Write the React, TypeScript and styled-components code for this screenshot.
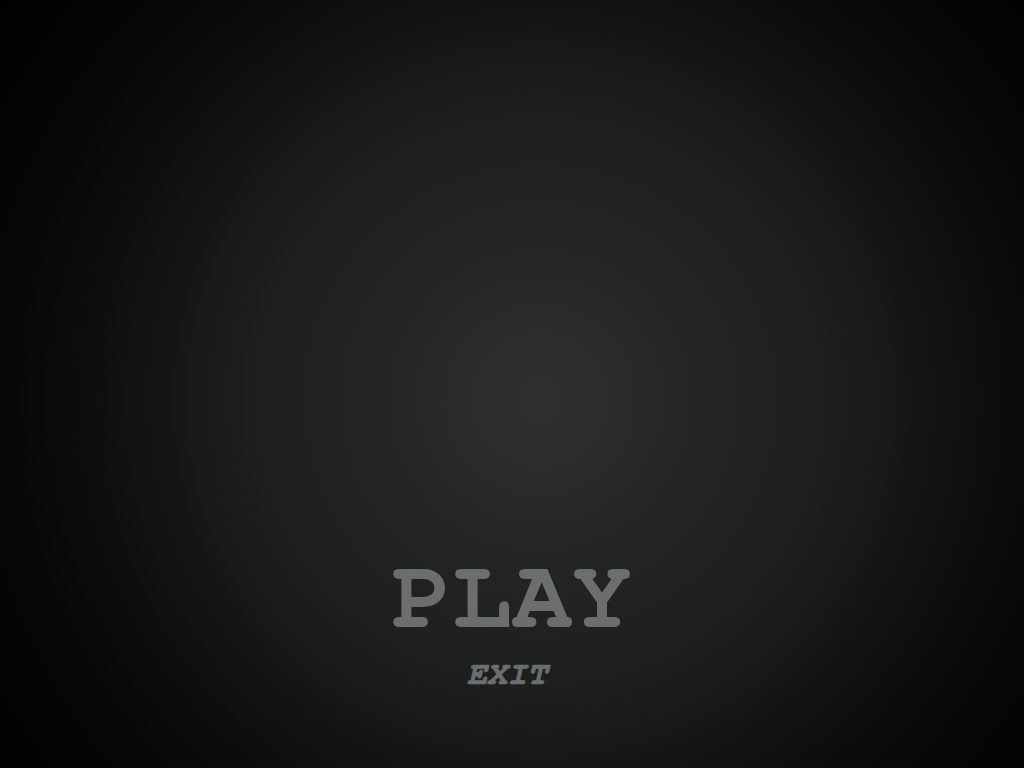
import React from "react";
import styled, { createGlobalStyle } from "styled-components";

const Global = createGlobalStyle`
  html, body { margin: 0; padding: 0; background: #000; }
  #root { min-height: 100vh; }
`;

const Screen = styled.main`
  width: 100vw;
  height: 100vh;
  display: flex;
  flex-direction: column;
  align-items: center;
  justify-content: flex-end;
  padding-bottom: 77px;
  box-sizing: border-box;
  background: radial-gradient(
    circle at 540px 400px,
    #2f3030 0px,
    #222323 190px,
    #1d1e1e 290px,
    #151616 370px,
    #111212 400px,
    #060606 540px,
    #000 700px
  );
  font-family: FreeMono, "Courier New", monospace;
  overflow: hidden;
`;

const Menu = styled.nav`
  display: flex;
  flex-direction: column;
  align-items: center;
  gap: 10px;
`;

const MenuItem = styled.button<{ $size: number; $italic?: boolean; $shift?: number; $stroke?: number }>`
  background: none;
  border: none;
  padding: 0;
  margin: 0 ${(p) => (p.$shift ? p.$shift * 2 : 0)}px 0 0;
  cursor: pointer;
  font-family: inherit;
  font-weight: 700;
  font-size: ${(p) => p.$size}px;
  font-style: ${(p) => (p.$italic ? "italic" : "normal")};
  line-height: 1;
  color: #6b6e6f;
  -webkit-text-stroke: ${(p) => p.$stroke ?? 0}px #6b6e6f;
  letter-spacing: 0;
`;

export default function App() {
  return (
    <>
      <Global />
      <Screen>
        <Menu>
          <MenuItem $size={100}>PLAY</MenuItem>
          <MenuItem $size={34} $italic $shift={4} $stroke={0.7}>
            EXIT
          </MenuItem>
        </Menu>
      </Screen>
    </>
  );
}
